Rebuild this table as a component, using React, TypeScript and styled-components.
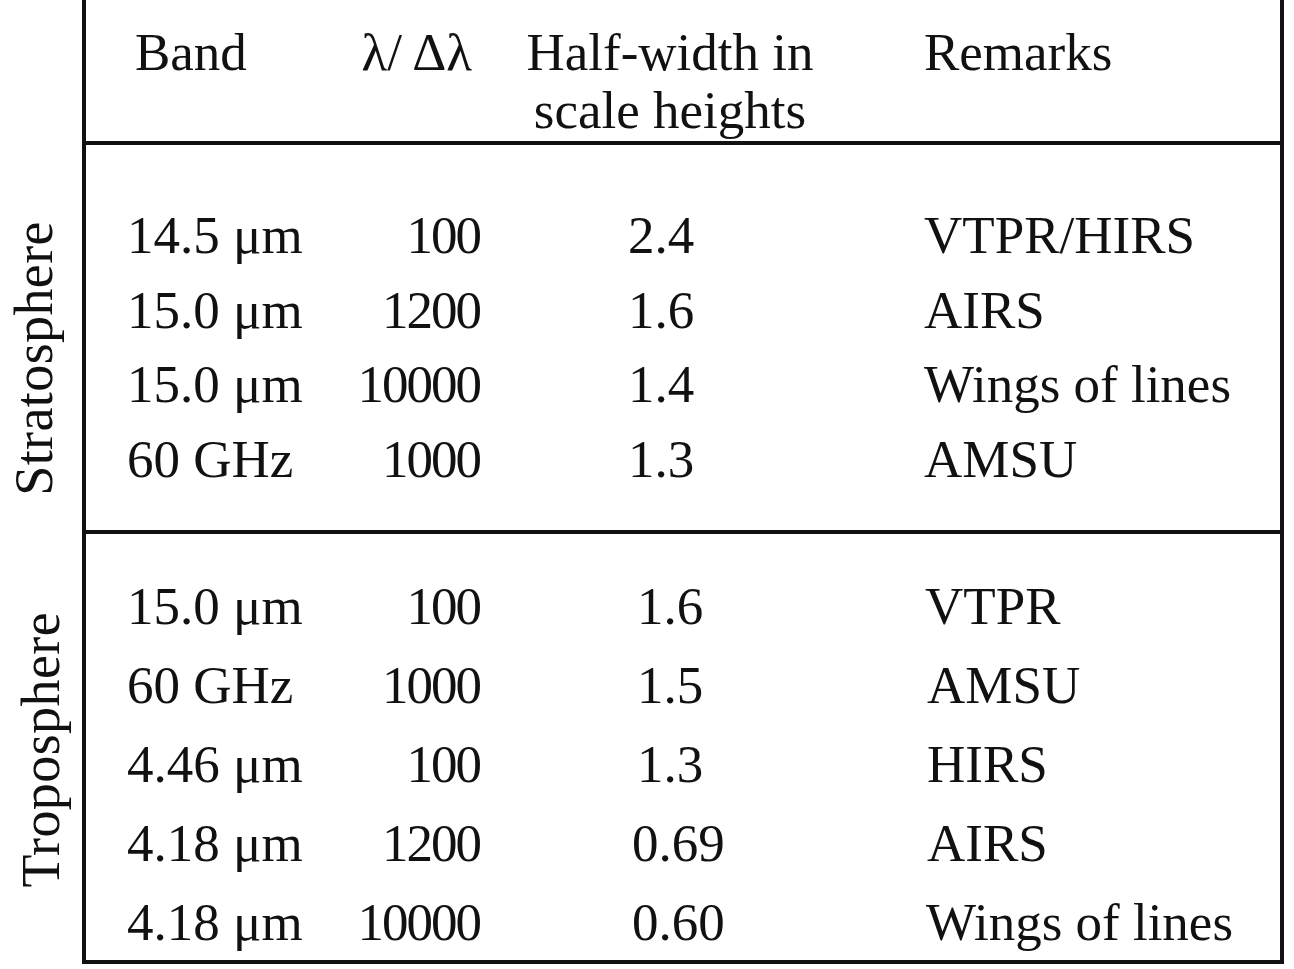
import React from "react";
import styled, { createGlobalStyle } from "styled-components";

const Global = createGlobalStyle`
  html, body { margin: 0; padding: 0; background: #fff; }
  * { box-sizing: border-box; }
  body { font-family: "Liberation Serif", "Times New Roman", serif; color: #111; }
`;

const Page = styled.div`
  width: 1294px;
  height: 969px;
  display: flex;
  flex-direction: column;
  overflow: hidden;
`;

const Band = styled.div<{ $h: number }>`
  display: flex;
  height: ${(p) => p.$h}px;
`;

const LabelCell = styled.div<{ $shift: number; $left: number }>`
  width: 82px;
  flex: none;
  display: flex;
  align-items: center;
  padding-top: ${(p) => p.$shift}px;
  padding-left: ${(p) => p.$left}px;
`;

const SideLabel = styled.div`
  writing-mode: vertical-rl;
  transform: rotate(180deg);
  font-size: 54px;
  line-height: 54px;
  letter-spacing: 0.4px;
  white-space: nowrap;
`;

const Box = styled.div<{ $pt: number }>`
  width: 1202px;
  flex: none;
  border-left: 4px solid #111;
  border-right: 4px solid #111;
  border-bottom: 4px solid #111;
  padding-top: ${(p) => p.$pt}px;
  padding-left: 41px;
`;

const Grid = styled.div<{ $row: number }>`
  display: grid;
  grid-template-columns: 200px 155px 442px 1fr;
  grid-auto-rows: ${(p) => p.$row}px;
  font-size: 53px;
  line-height: ${(p) => p.$row}px;
  white-space: nowrap;
`;

const Cell = styled.div<{ $align?: "left" | "right" | "center"; $pl?: number; $pr?: number }>`
  text-align: ${(p) => p.$align || "left"};
  padding-left: ${(p) => p.$pl || 0}px;
  padding-right: ${(p) => p.$pr || 0}px;
`;

const Ratio = styled.div`
  text-align: right;
  padding-right: 2px;
  letter-spacing: -2px;
`;

type Row = { band: string; ratio: string; hw: string; hwPad: number; rem: string; remPad: number };

const strat: Row[] = [
  { band: "14.5 μm", ratio: "100", hw: "2.4", hwPad: 146, rem: "VTPR/HIRS", remPad: -7 },
  { band: "15.0 μm", ratio: "1200", hw: "1.6", hwPad: 146, rem: "AIRS", remPad: -1 },
  { band: "15.0 μm", ratio: "10000", hw: "1.4", hwPad: 146, rem: "Wings of lines", remPad: -2 },
  { band: "60 GHz", ratio: "1000", hw: "1.3", hwPad: 146, rem: "AMSU", remPad: -1 },
];

const trop: Row[] = [
  { band: "15.0 μm", ratio: "100", hw: "1.6", hwPad: 155, rem: "VTPR", remPad: 1 },
  { band: "60 GHz", ratio: "1000", hw: "1.5", hwPad: 155, rem: "AMSU", remPad: 3 },
  { band: "4.46 μm", ratio: "100", hw: "1.3", hwPad: 155, rem: "HIRS", remPad: 3 },
  { band: "4.18 μm", ratio: "1200", hw: "0.69", hwPad: 150, rem: "AIRS", remPad: 3 },
  { band: "4.18 μm", ratio: "10000", hw: "0.60", hwPad: 150, rem: "Wings of lines", remPad: 2 },
];

const DataRows: React.FC<{ rows: Row[] }> = ({ rows }) => (
  <>
    {rows.map((r, i) => (
      <React.Fragment key={i}>
        <Cell $pl={-1}>{r.band}</Cell>
        <Ratio>{r.ratio}</Ratio>
        <Cell $pl={r.hwPad}>{r.hw}</Cell>
        <Cell $pl={r.remPad}>{r.rem}</Cell>
      </React.Fragment>
    ))}
  </>
);

export default function App() {
  return (
    <>
      <Global />
      <Page>
        <Band $h={145}>
          <LabelCell $shift={0} $left={0} />
          <Box $pt={23}>
            <Grid $row={58}>
              <Cell $pl={8}>Band</Cell>
              <Cell $align="right" $pr={10}>λ/ Δλ</Cell>
              <Cell $align="center" $pr={66}>
                Half-width in
                <br />
                scale heights
              </Cell>
              <Cell $pl={-3}>Remarks</Cell>
            </Grid>
          </Box>
        </Band>
        <Band $h={389}>
          <LabelCell $shift={37} $left={7}>
            <SideLabel>Stratosphere</SideLabel>
          </LabelCell>
          <Box $pt={53}>
            <Grid $row={74.5}>
              <DataRows rows={strat} />
            </Grid>
          </Box>
        </Band>
        <Band $h={430}>
          <LabelCell $shift={2} $left={14}>
            <SideLabel>Troposphere</SideLabel>
          </LabelCell>
          <Box $pt={33}>
            <Grid $row={79}>
              <DataRows rows={trop} />
            </Grid>
          </Box>
        </Band>
      </Page>
    </>
  );
}
